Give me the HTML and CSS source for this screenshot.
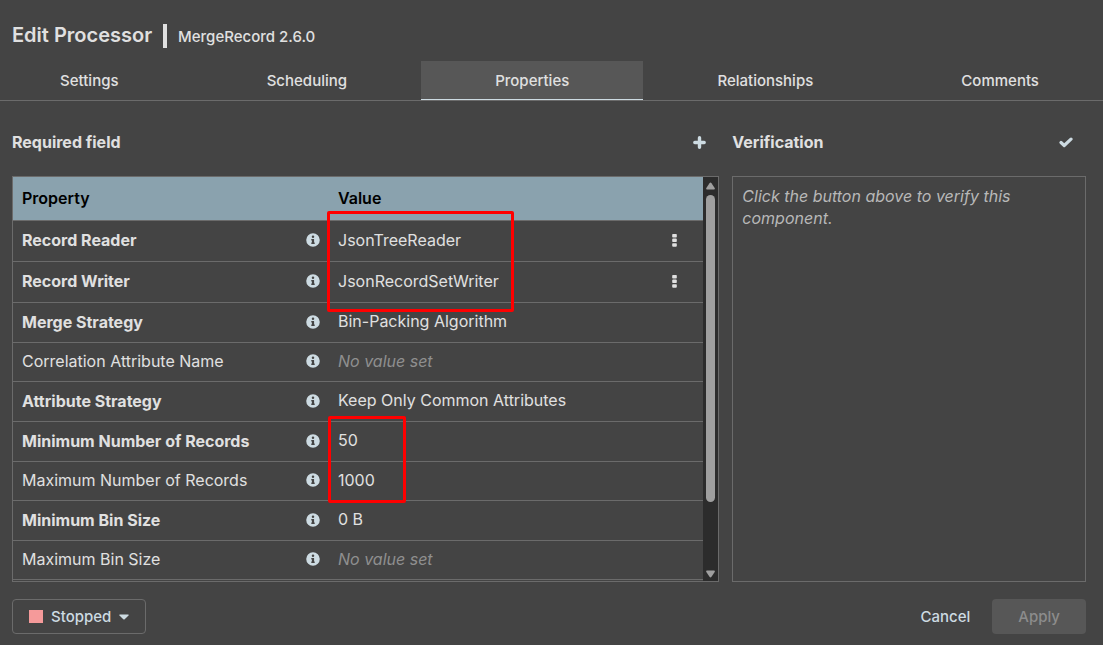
FILE: index.html
```html
<!DOCTYPE html>
<html lang="en">
<head>
<meta charset="utf-8">
<title>Edit Processor</title>
<link rel="stylesheet" href="styles.css">
</head>
<body>
<svg class="sprite" aria-hidden="true">
  <symbol id="info" viewBox="0 0 512 512"><path fill="currentColor" fill-rule="evenodd" d="M256 8a248 248 0 1 0 0 496 248 248 0 0 0 0-496zm0 84a46 46 0 1 1 0 92 46 46 0 0 1 0-92zm64 294c0 8-5 14-12 14H204c-7 0-12-6-12-14v-24c0-8 5-14 12-14h12v-76h-12c-7 0-12-6-12-14v-24c0-8 5-14 12-14h80c7 0 12 6 12 14v114h12c7 0 12 6 12 14z"/></symbol>
  <symbol id="dots" viewBox="0 0 5 13"><path fill="currentColor" d="M.8 0h3.400l.600.600v2.300l-.600.600H.8L.2 2.900V.6zM.8 4.600h3.400l.600.600v2.300l-.600.600H.8l-.6-.6V5.200zM.8 9.200h3.400l.600.600v2.300l-.600.600H.8l-.6-.6V9.800z"/></symbol>
</svg>
<main class="dialog">
  <header class="title">
    <h1 class="title-name">Edit Processor</h1>
    <span class="title-bar"></span>
    <span class="title-type">MergeRecord 2.6.0</span>
  </header>
  <nav class="tabs" role="tablist">
    <button class="tab" role="tab">Settings</button>
    <button class="tab" role="tab">Scheduling</button>
    <button class="tab tab-active" role="tab" aria-selected="true">Properties</button>
    <button class="tab" role="tab">Relationships</button>
    <button class="tab" role="tab">Comments</button>
  </nav>
  <div class="content">
    <section class="column">
      <div class="column-head">
        <h2 class="heading">Required field</h2>
        <button class="icon-button" aria-label="Add property"><svg width="13" height="13" viewBox="0 0 13 13"><path d="M6.5 1.8v9.4M1.8 6.5h9.4" stroke="currentColor" stroke-width="3.4" stroke-linecap="round"/></svg></button>
      </div>
      <div class="panel listing">
        <div class="listing-view">
          <table class="properties">
            <colgroup><col class="col-name"><col><col class="col-actions"></colgroup>
            <thead><tr><th>Property</th><th>Value</th><th></th></tr></thead>
            <tbody>
              <tr class="service required"><td><div class="name">Record Reader<svg class="info"><use href="#info"/></svg></div></td><td>JsonTreeReader</td><td><button class="menu" aria-label="Record Reader actions"><svg width="5" height="13"><use href="#dots"/></svg></button></td></tr>
              <tr class="service required"><td><div class="name">Record Writer<svg class="info"><use href="#info"/></svg></div></td><td>JsonRecordSetWriter</td><td><button class="menu" aria-label="Record Writer actions"><svg width="5" height="13"><use href="#dots"/></svg></button></td></tr>
              <tr class="required"><td><div class="name">Merge Strategy<svg class="info"><use href="#info"/></svg></div></td><td>Bin-Packing Algorithm</td><td></td></tr>
              <tr><td><div class="name">Correlation Attribute Name<svg class="info"><use href="#info"/></svg></div></td><td class="unset">No value set</td><td></td></tr>
              <tr class="required"><td><div class="name">Attribute Strategy<svg class="info"><use href="#info"/></svg></div></td><td>Keep Only Common Attributes</td><td></td></tr>
              <tr class="required"><td><div class="name">Minimum Number of Records<svg class="info"><use href="#info"/></svg></div></td><td>50</td><td></td></tr>
              <tr><td><div class="name">Maximum Number of Records<svg class="info"><use href="#info"/></svg></div></td><td>1000</td><td></td></tr>
              <tr class="required"><td><div class="name">Minimum Bin Size<svg class="info"><use href="#info"/></svg></div></td><td>0 B</td><td></td></tr>
              <tr><td><div class="name">Maximum Bin Size<svg class="info"><use href="#info"/></svg></div></td><td class="unset">No value set</td><td></td></tr>
            </tbody>
          </table>
        </div>
        <div class="scrollbar" aria-hidden="true">
          <svg width="9" height="8" viewBox="0 0 9 8"><path fill="currentColor" d="M3.5 1.2Q4.500 0 5.500 1.200L8.700 6Q9.300 7.500 8 7.500H1Q-.3 7.500.3 6z"/></svg>
          <div class="track"><div class="thumb"></div></div>
          <svg width="9" height="8" viewBox="0 0 9 8"><path fill="currentColor" d="M3.5 6.800Q4.500 8 5.500 6.800L8.700 2Q9.300.5 8 .5H1Q-.3.5.3 2z"/></svg>
        </div>
        <div class="mark mark-services"></div>
        <div class="mark mark-records"></div>
      </div>
    </section>
    <section class="column">
      <div class="column-head">
        <h2 class="heading">Verification</h2>
        <button class="icon-button" aria-label="Verify"><svg width="14" height="11" viewBox="0 0 14 11"><path d="M2 5.500 5.200 8.500 12 2.200" fill="none" stroke="currentColor" stroke-width="3.200" stroke-linecap="round" stroke-linejoin="round"/></svg></button>
      </div>
      <div class="panel hint">Click the button above to verify this component.</div>
    </section>
  </div>
  <footer class="footer">
    <button class="button button-status"><span class="stopped"></span>Stopped<svg width="10" height="6" viewBox="0 0 10 6"><path fill="currentColor" d="M.8.500h8.400q1 .2.300 1.100L5.700 5.300Q5 5.900 4.300 5.300L.500 1.600Q-.2.700.8.500z"/></svg></button>
    <div class="actions">
      <button class="button button-cancel">Cancel</button>
      <button class="button button-apply" disabled>Apply</button>
    </div>
  </footer>
</main>
</body>
</html>
```
FILE: styles.css
```css
* { box-sizing: border-box; }
body {
  margin: 0;
  background: #444;
  color: #e0e0e0;
  font: 16px/22px Inter, "Liberation Sans", sans-serif;
}
button { font: inherit; color: inherit; background: none; border: 0; padding: 0; }
h1, h2 { margin: 0; }
svg { display: block; flex: none; }
.sprite { display: none; }

.dialog { display: flex; flex-direction: column; min-height: 100vh; overflow: hidden; }
.title { display: flex; align-items: center; gap: 11px; padding: 23px 12px 13px; }
.title-name { font-size: 20px; line-height: 25px; font-weight: 600; }
.title-bar { width: 4px; height: 24px; background: #e0e0e0; }
.title-type { padding-top: 3px; font-size: 15px; font-weight: 500; }

.tabs { display: flex; margin: 0 -10px 0 -14px; border-bottom: 1px solid #6b6b6b; }
.tab { flex: 1 0 auto; height: 39px; padding: 2px 24px 0; border-bottom: 1px solid transparent; font-size: 15px; font-weight: 500; }
.tab-active { background: #575757; border-bottom-color: #cddbe2; }

.content {
  flex: 1;
  display: grid;
  grid-template-columns: 2fr 1fr;
  gap: 13px;
  padding: 23px 17px 17px 12px;
}
.column { display: flex; flex-direction: column; min-width: 0; }
.column-head { display: flex; justify-content: space-between; align-items: center; height: 36px; margin-bottom: 16px; }
.heading { font-size: 16px; font-weight: 700; }
.icon-button { color: #cddbe2; padding: 0 13px; }
.panel { flex: 1; border: 1px solid #6b6b6b; }

.listing { position: relative; display: flex; }
.listing-view { flex: 1; min-width: 0; }
.properties { width: 100%; table-layout: fixed; border-collapse: separate; border-spacing: 0; }
.col-name { width: 316px; }
.col-actions { width: 47px; }
.properties th, .properties td {
  height: 39px;
  padding: 0 9px 2px;
  border-bottom: 1px solid #6b6b6b;
  text-align: left;
  white-space: nowrap;
}
.properties th { height: 44px; background: #8aa2ae; color: #000; font-weight: 600; }
.properties .required td { height: 40px; }
.properties .service td { height: 41px; }
.properties td:nth-child(2) { padding-bottom: 3px; }
.name { display: flex; justify-content: space-between; align-items: center; }
.required .name { font-weight: 700; }
.info { width: 14px; height: 14px; color: #cddbe2; }
.properties .unset { color: #8f8f8f; font-style: italic; }
.menu { display: block; padding: 0 7px; }

.scrollbar {
  display: flex;
  flex-direction: column;
  align-items: center;
  width: 15px;
  padding: 5px 0 3px;
  background: #2c2c2c;
  color: #9f9f9f;
}
.track { flex: 1; width: 9px; padding: 5px 0; }
.thumb { height: 83%; border-radius: 5px; background: #9f9f9f; }

.mark { position: absolute; border: 3px solid #f00; border-radius: 2px; }
.mark-services { left: 314px; top: 34px; width: 187px; height: 101px; }
.mark-records { left: 315px; top: 239px; width: 78px; height: 87px; }

.hint { padding: 8px 9px; color: #b8b8b8; font-style: italic; }

.footer { display: flex; justify-content: space-between; padding: 0 17px 11px 12px; }
.actions { display: flex; gap: 6px; }
.button { display: flex; align-items: center; justify-content: center; height: 35px; padding: 0 16px; border-radius: 4px; color: #cddbe2; font-size: 15px; font-weight: 500; }
.button-status { gap: 8px; border: 1px solid #6b6b6b; }
.stopped { width: 14px; height: 13px; background: #f59a9a; }
.button-apply { padding: 0 26px; background: #575757; color: #8c8c8c; }
```
